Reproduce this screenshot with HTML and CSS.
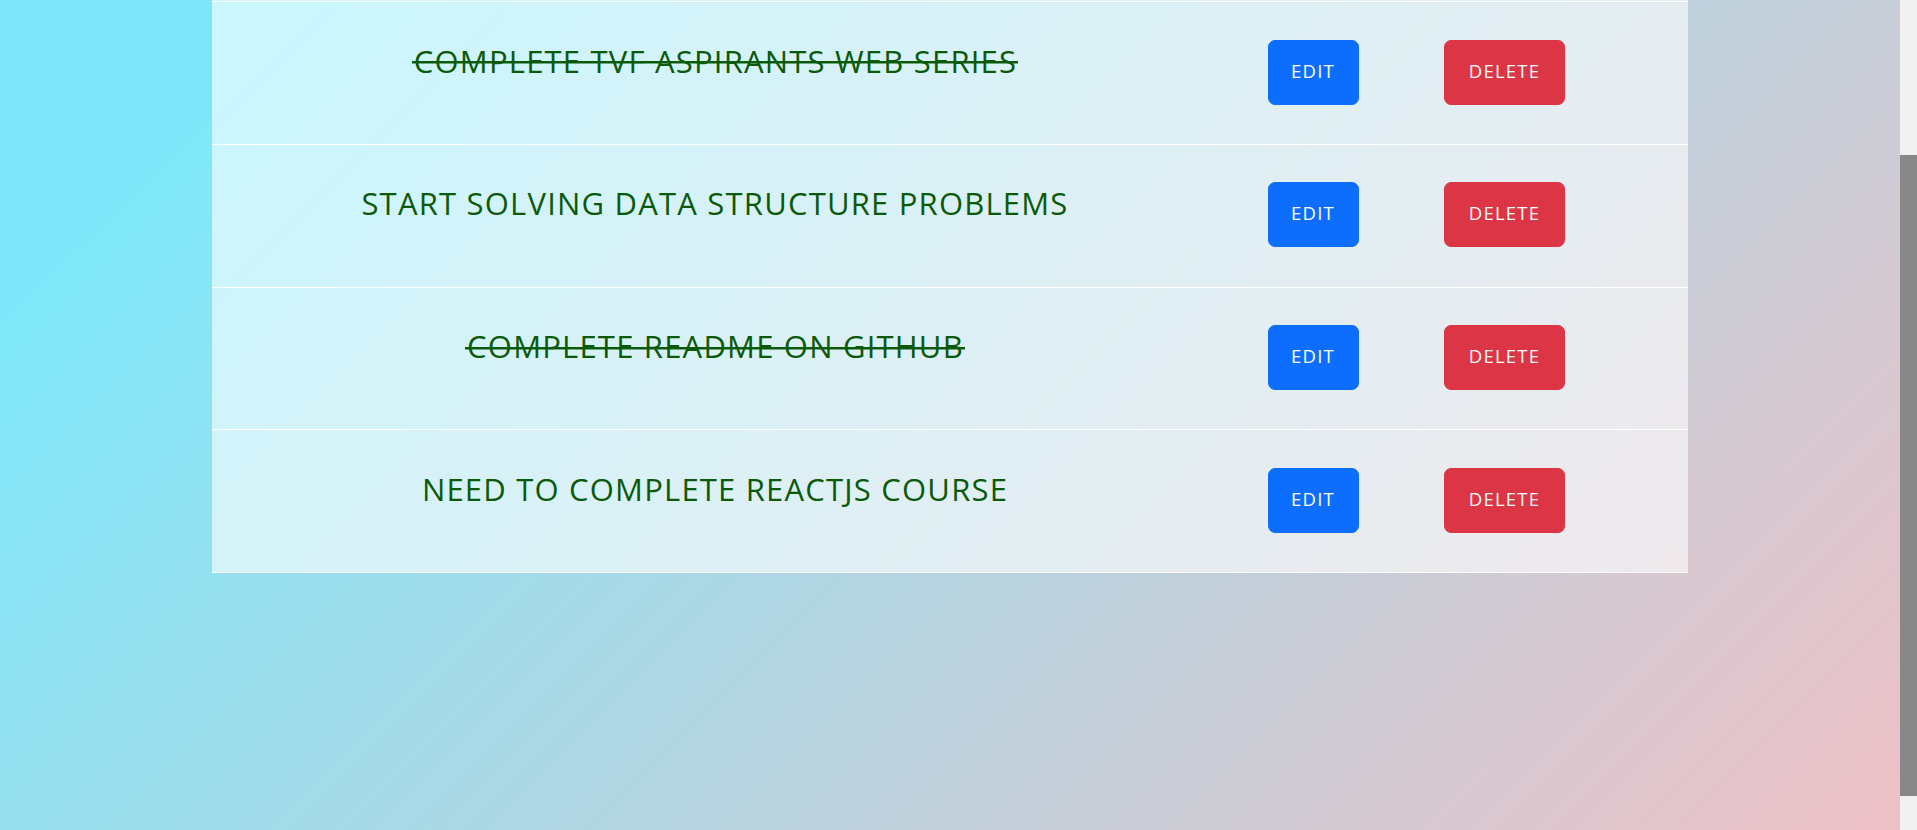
FILE: index.html
```html
<!DOCTYPE html>
<html lang="en">
<head>
<meta charset="utf-8">
<title>Todo List</title>
<link rel="stylesheet" href="styles.css">
</head>
<body>
<div class="window">
  <main class="app">
    <section class="todo-table">
      <div class="todo-row">
        <div class="todo-text"><span class="todo-label done">COMPLETE TVF ASPIRANTS WEB SERIES</span></div>
        <div class="todo-action"><button class="btn btn-edit" type="button">EDIT</button></div>
        <div class="todo-action"><button class="btn btn-delete" type="button">DELETE</button></div>
      </div>
      <div class="todo-row">
        <div class="todo-text"><span class="todo-label">START SOLVING DATA STRUCTURE PROBLEMS</span></div>
        <div class="todo-action"><button class="btn btn-edit" type="button">EDIT</button></div>
        <div class="todo-action"><button class="btn btn-delete" type="button">DELETE</button></div>
      </div>
      <div class="todo-row">
        <div class="todo-text"><span class="todo-label done">COMPLETE README ON GITHUB</span></div>
        <div class="todo-action"><button class="btn btn-edit" type="button">EDIT</button></div>
        <div class="todo-action"><button class="btn btn-delete" type="button">DELETE</button></div>
      </div>
      <div class="todo-row">
        <div class="todo-text"><span class="todo-label">NEED TO COMPLETE REACTJS COURSE</span></div>
        <div class="todo-action"><button class="btn btn-edit" type="button">EDIT</button></div>
        <div class="todo-action"><button class="btn btn-delete" type="button">DELETE</button></div>
      </div>
    </section>
  </main>
  <div class="scrollbar"><div class="scrollbar-thumb"></div></div>
</div>
</body>
</html>
```

FILE: styles.css
```css
html, body {
  margin: 0;
  height: 100%;
  overflow: hidden;
}

body {
  font-family: "Open Sans", "Liberation Sans", sans-serif;
}

.window {
  display: flex;
  height: 100vh;
}

.app {
  flex: 1;
  display: flex;
  flex-direction: column;
  align-items: center;
  background-color: #7ee8fa;
  background-image: linear-gradient(315deg, #eec0c6 0%, #7ee8fa 88%);
}

.scrollbar {
  width: 17px;
  flex: none;
  background: #f1f1f1;
  padding-top: 155px;
  box-sizing: border-box;
}

.scrollbar-thumb {
  height: 641px;
  background: #888888;
}

.todo-table {
  width: 1476px;
  border-top: 1px solid rgba(255, 255, 255, 0.6);
}

.todo-row {
  display: grid;
  grid-template-columns: 1006px 190px 193px 1fr;
  align-items: start;
  padding-top: 37.5px;
  height: 104.25px;
  background: rgba(255, 255, 255, 0.6);
  border-bottom: 1px solid #ffffff;
}

.todo-row:first-child {
  border-top: 1px solid #ffffff;
}

.todo-text {
  text-align: center;
  font-size: 31px;
  font-weight: 500;
  letter-spacing: 1.2px;
  color: #0a5a0a;
  line-height: normal;
}

.todo-label.done {
  padding: 0 1px 0 2px;
  background-image: linear-gradient(#0a5a0a, #0a5a0a);
  background-repeat: no-repeat;
  background-size: 100% 2.5px;
  background-position: 0 21.5px;
}

.todo-action {
  display: flex;
  justify-content: center;
}

.btn {
  display: inline-flex;
  align-items: center;
  justify-content: center;
  height: 65px;
  box-sizing: border-box;
  border: 1px solid transparent;
  border-radius: 7px;
  font-family: inherit;
  font-size: 18.5px;
  letter-spacing: 1.2px;
  color: #ffffff;
  cursor: pointer;
  padding: 0 0 4px 0;
}

.btn-edit {
  width: 91px;
  background: #0d6efd;
  border-color: #0d6efd;
}

.btn-delete {
  width: 121px;
  background: #dc3545;
  border-color: #dc3545;
}
```
